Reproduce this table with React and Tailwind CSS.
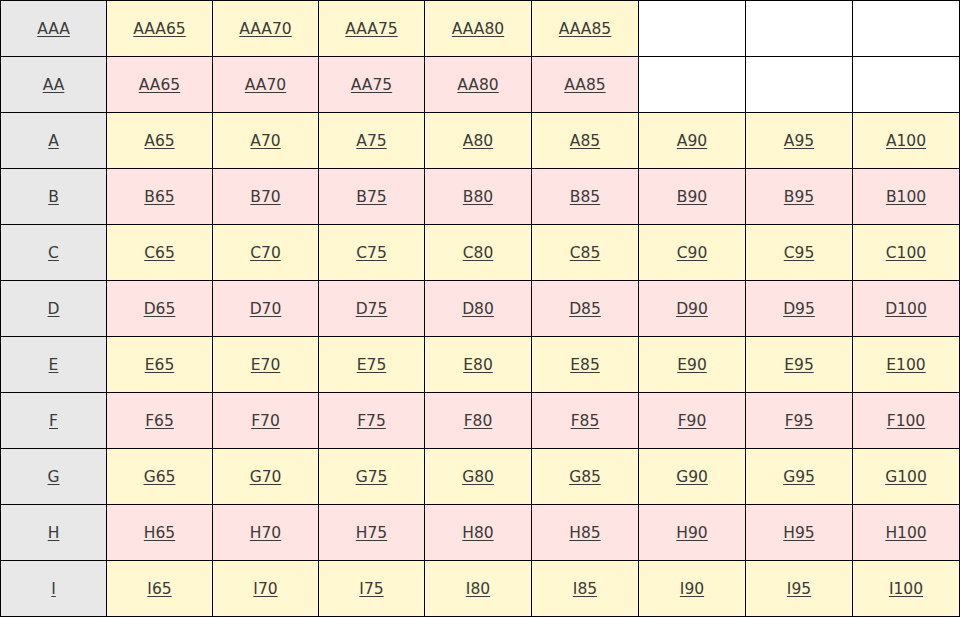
import React from "react";

const cols = ["65", "70", "75", "80", "85", "90", "95", "100"];
const rows = ["AAA", "AA", "A", "B", "C", "D", "E", "F", "G", "H", "I"];

export default function App() {
  return (
    <div
      className="grid grid-cols-[106px_106px_106px_106px_107px_107px_107px_107px_107px] w-[960px] border-t border-l border-black bg-white"
      style={{ fontFamily: '"DejaVu Sans", Verdana, sans-serif' }}
    >
      {rows.map((r, ri) => {
        const bg = ri % 2 === 0 ? "bg-[#fff8d0]" : "bg-[#ffe4e4]";
        const limited = r === "AAA" || r === "AA";
        return (
          <React.Fragment key={r}>
            <div className="h-14 pt-[2px] border-r border-b border-black bg-[#e8e8e8] flex items-center justify-center">
              <a href="#" className="text-[15.5px] text-[#3a3a3a] underline underline-offset-2">
                {r}
              </a>
            </div>
            {cols.map((c, ci) => {
              const empty = limited && ci >= 5;
              return (
                <div
                  key={c}
                  className={
                    "h-14 pt-[2px] border-r border-b border-black flex items-center justify-center " +
                    (empty ? "bg-white" : bg)
                  }
                >
                  {!empty && (
                    <a href="#" className="text-[15.5px] text-[#3a3a3a] underline underline-offset-2">
                      {r + c}
                    </a>
                  )}
                </div>
              );
            })}
          </React.Fragment>
        );
      })}
    </div>
  );
}
